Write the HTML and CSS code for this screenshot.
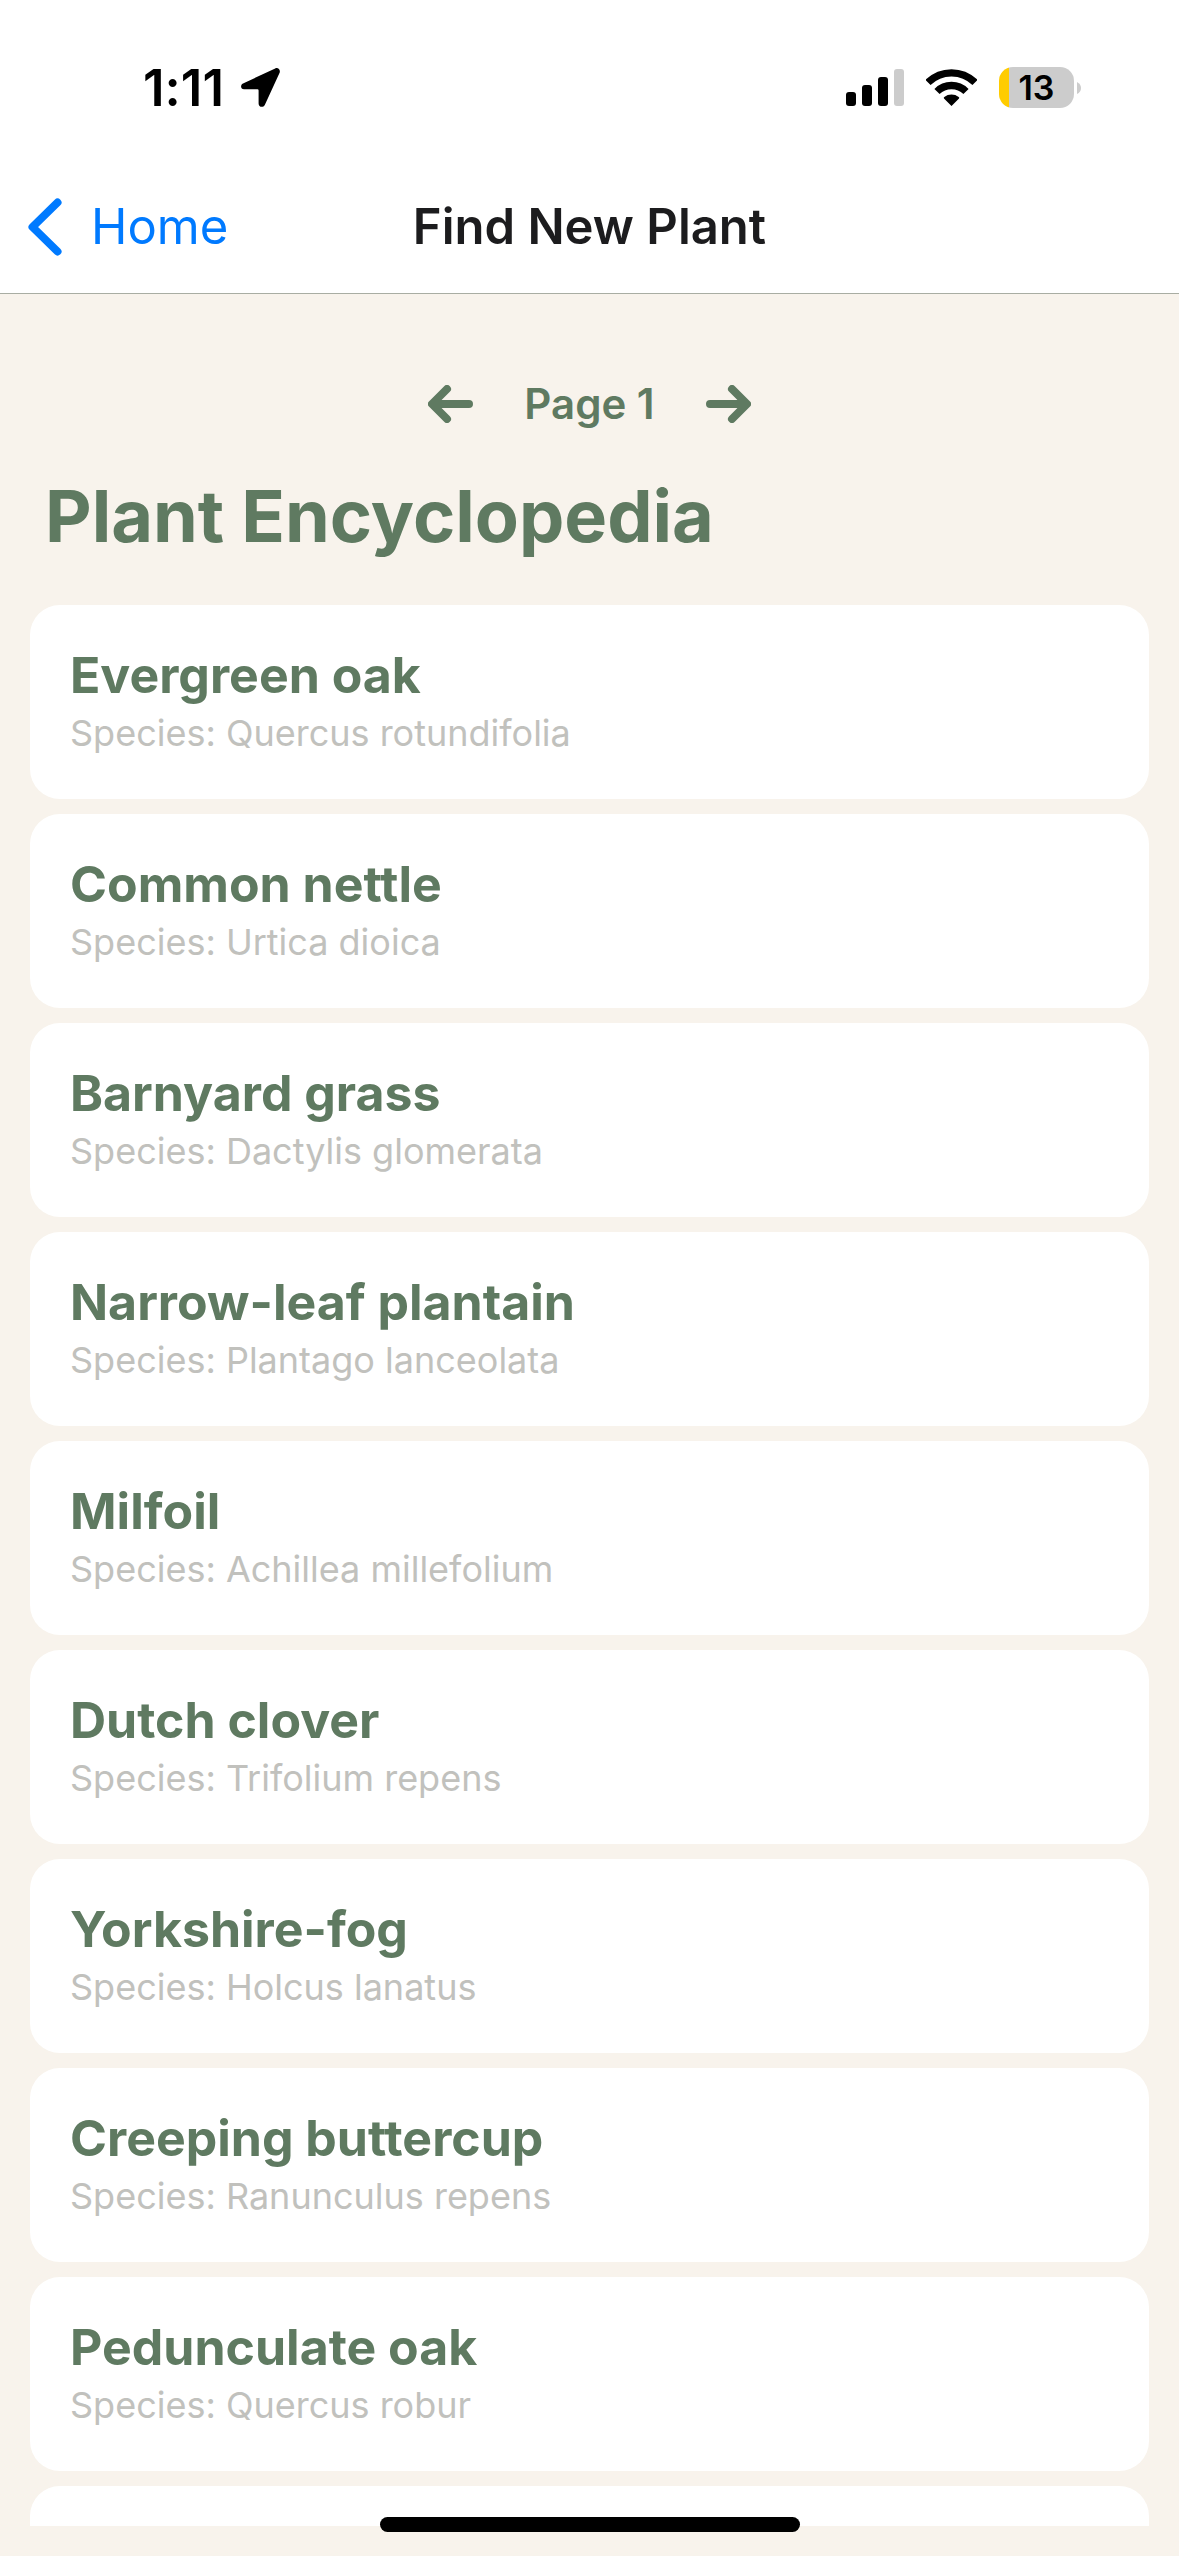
FILE: index.html
```html
<!DOCTYPE html>
<html lang="en">
<head>
<meta charset="utf-8">
<meta name="viewport" content="width=device-width, initial-scale=1">
<title>Find New Plant</title>
<link rel="stylesheet" href="styles.css">
</head>
<body>
<div class="app">
  <header class="header">
    <div class="status">
      <div class="status-group">
        <span class="time">1:11</span>
        <svg class="location" width="39" height="39" viewBox="0 0 39 39" aria-hidden="true"><path d="M34.200 .4 2 15.500C-1 17-.4 21.300 3 21.300H16.500Q17.600 21.300 17.600 22.400V35.500C17.600 39.500 22.300 40 23.900 36.700L38.600 4.800C39.700 2 37.200-.8 34.200 .4Z"/></svg>
      </div>
      <div class="status-group status-icons">
        <svg width="58" height="37" viewBox="0 0 58 37" role="img" aria-label="Signal"><rect y="23" width="10" height="14" rx="3"/><rect x="16" y="16" width="10" height="21" rx="3"/><rect x="32" y="8" width="10" height="29" rx="3"/><rect class="dim" x="48" width="10" height="37" rx="3"/></svg>
        <svg width="51" height="37" viewBox="0 0 51 37" role="img" aria-label="Wi-Fi"><g fill="none" stroke="#000" stroke-width="7.300"><path d="M2 13.500A33.300 33.300 0 0 1 49 13.500"/><path d="M11 22.500A20.500 20.500 0 0 1 40 22.500"/></g><path d="M25.500 37 18 29.600Q17.300 28.700 18.300 28A12 12 0 0 1 32.700 28Q33.700 28.700 33 29.600Z"/></svg>
        <div class="battery">
          <span class="battery-level">13</span>
          <svg width="4" height="12" viewBox="0 0 4 12" aria-hidden="true"><path class="dim" d="M0 0Q4 2 4 6T0 12Z"/></svg>
        </div>
      </div>
    </div>
    <nav class="nav">
      <a class="back" href="#home"><svg width="34" height="58" viewBox="0 0 34 58" aria-hidden="true"><path d="M29.500 4.500 4.500 29 29.500 53.500"/></svg>Home</a>
      <h1 class="title">Find New Plant</h1>
    </nav>
  </header>
  <main class="main">
    <div class="pager">
      <button class="arrow" type="button" aria-label="Previous page"><svg width="46" height="38" viewBox="0 0 46 38" aria-hidden="true"><path d="M41 19H5M19 4 4 19 19 34"/></svg></button>
      <span>Page 1</span>
      <button class="arrow" type="button" aria-label="Next page"><svg width="46" height="38" viewBox="0 0 46 38" aria-hidden="true"><path d="M5 19H41M27 4 42 19 27 34"/></svg></button>
    </div>
    <h2 class="heading">Plant Encyclopedia</h2>
    <ul class="list">
      <li class="card"><h3 class="name">Evergreen oak</h3><p class="species">Species: Quercus rotundifolia</p></li>
      <li class="card"><h3 class="name">Common nettle</h3><p class="species">Species: Urtica dioica</p></li>
      <li class="card"><h3 class="name">Barnyard grass</h3><p class="species">Species: Dactylis glomerata</p></li>
      <li class="card"><h3 class="name">Narrow-leaf plantain</h3><p class="species">Species: Plantago lanceolata</p></li>
      <li class="card"><h3 class="name">Milfoil</h3><p class="species">Species: Achillea millefolium</p></li>
      <li class="card"><h3 class="name">Dutch clover</h3><p class="species">Species: Trifolium repens</p></li>
      <li class="card"><h3 class="name">Yorkshire-fog</h3><p class="species">Species: Holcus lanatus</p></li>
      <li class="card"><h3 class="name">Creeping buttercup</h3><p class="species">Species: Ranunculus repens</p></li>
      <li class="card"><h3 class="name">Pedunculate oak</h3><p class="species">Species: Quercus robur</p></li>
      <li class="card"></li>
    </ul>
  </main>
  <div class="home-indicator"></div>
</div>
</body>
</html>
```
FILE: styles.css
```css
* {
  box-sizing: border-box;
  margin: 0;
  padding: 0;
}

body {
  background: #f8f3ec;
  color: #5f7a61;
  font-family: Inter, "Liberation Sans", sans-serif;
  font-variant-ligatures: none;
}

svg {
  display: block;
  flex: none;
}

.app {
  position: relative;
  display: flex;
  flex-direction: column;
  height: 100vh;
  padding-bottom: 30px;
}

.header {
  flex: none;
  background: #fff;
  border-bottom: 1px solid #a9ada3;
}

.status {
  display: flex;
  justify-content: space-between;
  align-items: center;
  padding: 63px 98px 49px 143px;
  color: #000;
}

.status-group {
  display: flex;
  align-items: center;
  gap: 17px;
}

.status-icons {
  gap: 22px;
}

.time {
  font-size: 51px;
  font-weight: 600;
  line-height: 49px;
}

.dim {
  fill: #ccc;
}

.battery {
  display: flex;
  align-items: center;
  gap: 3px;
}

.battery-level {
  width: 75px;
  border-radius: 14px;
  background: linear-gradient(to right, #fc0 10px, #ccc 10px);
  font-size: 34px;
  font-weight: 600;
  line-height: 41px;
  text-align: center;
}

.nav {
  display: grid;
  grid-template-columns: 1fr auto 1fr;
  align-items: center;
  height: 132px;
  padding: 0 28px;
}

.back {
  display: flex;
  align-items: center;
  gap: 29px;
  color: #007aff;
  font-size: 49px;
  line-height: 60px;
  text-decoration: none;
}

.back path,
.arrow path {
  fill: none;
  stroke: currentColor;
  stroke-width: 8;
  stroke-linecap: round;
  stroke-linejoin: round;
}

.title {
  color: #1c1c1e;
  font-size: 49px;
  font-weight: 600;
  line-height: 60px;
}

.main {
  flex: 1;
  min-height: 0;
  overflow: hidden;
  padding: 85px 30px 0;
}

.pager {
  display: flex;
  justify-content: center;
  align-items: center;
  gap: 50px;
  font-size: 42px;
  font-weight: 600;
  line-height: 50px;
}

.arrow {
  border: 0;
  background: none;
  color: inherit;
}

.heading {
  padding: 47px 15px 49px;
  font-size: 72px;
  font-weight: 700;
  line-height: 80px;
}

.list {
  display: grid;
  gap: 15px;
  list-style: none;
}

.card {
  display: grid;
  gap: 6px;
  align-content: start;
  min-height: 194px;
  padding: 40px 40px 44px;
  border-radius: 30px;
  background: #fff;
}

.name {
  font-size: 50px;
  font-weight: 700;
  line-height: 60px;
}

.species {
  color: #c1c1bd;
  font-size: 36px;
  line-height: 44px;
}

.home-indicator {
  position: absolute;
  bottom: 24px;
  left: 50%;
  width: 420px;
  height: 15px;
  margin-left: -210px;
  border-radius: 8px;
  background: #000;
}
```
